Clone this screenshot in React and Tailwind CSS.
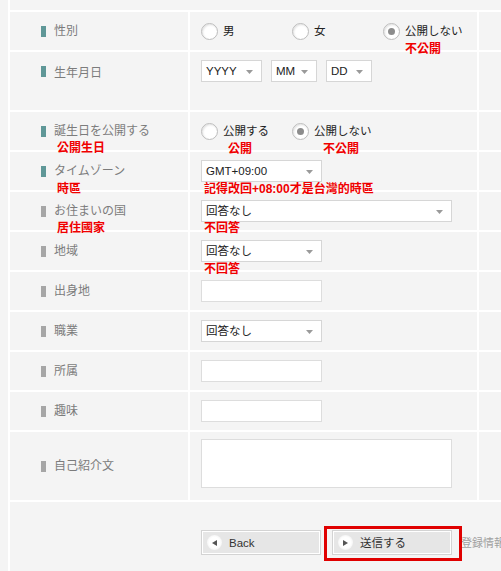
import React from "react";

const JP = "font-[family-name:'Liberation_Sans','Noto_Sans_CJK_JP',sans-serif]";
const TC = "font-[family-name:'Liberation_Sans','Noto_Sans_CJK_TC',sans-serif]";

function Red({ children, className }) {
  return (
    <span
      className={`absolute z-10 whitespace-nowrap text-[12px] leading-[14px] font-bold text-[#f00000] ${TC} ${className}`}
    >
      {children}
    </span>
  );
}

function Label({ text, required, className = "items-center", children }) {
  return (
    <div className={`relative flex bg-[#f4f4f4] pl-[31px] ${className}`}>
      <span
        className={`w-[5px] h-[11px] shrink-0 ${required ? "bg-[#5f9797]" : "bg-[#a6a6a6]"}`}
      />
      <span className={`ml-[8px] text-[12px] leading-[14px] text-[#7c7c7c] whitespace-nowrap ${JP}`}>
        {text}
      </span>
      {children}
    </div>
  );
}

function Radio({ checked, label, w = "w-[91px]" }) {
  return (
    <div className={`flex items-center ${w}`}>
      <span className="flex items-center justify-center w-[17px] h-[17px] rounded-full border border-[#bcbcbc] bg-white shadow-[inset_1px_1px_2px_rgba(0,0,0,0.12)]">
        {checked && <span className="w-[7px] h-[7px] rounded-full bg-[#8c8c8c]" />}
      </span>
      <span className={`ml-[5px] text-[11.5px] leading-[14px] text-[#222] whitespace-nowrap ${JP}`}>
        {label}
      </span>
    </div>
  );
}

function Select({ text, w }) {
  return (
    <div className={`relative flex items-center h-[22px] border border-[#d6d6d6] bg-white ${w}`}>
      <span className={`pl-[4px] text-[11.5px] leading-[14px] text-[#222] whitespace-nowrap ${JP}`}>
        {text}
      </span>
      <svg className="absolute right-[8px] top-[9px]" width="7" height="4" viewBox="0 0 7 4">
        <polygon points="0,0 7,0 3.5,4" fill="#9a9a9a" />
      </svg>
    </div>
  );
}

function Input({ w = "w-[121px]", h = "h-[22px]" }) {
  return <div className={`${w} ${h} border border-[#dddddd] bg-white`} />;
}

function Row({ h, children }) {
  return <div className={`grid grid-cols-[178px_287px_100px] gap-[2px] ${h}`}>{children}</div>;
}

function Value({ className = "items-center", children }) {
  return <div className={`relative flex bg-[#f4f4f4] pl-[11px] ${className}`}>{children}</div>;
}

function Extra() {
  return <div className="bg-[#f4f4f4]" />;
}

function Button({ label, dir }) {
  return (
    <div className="flex items-center w-[120px] h-[25px] border border-[#d3d3d3] bg-[#e6e6e6] shadow-[inset_0_0_0_1px_#ffffff] pl-[5px]">
      <span className="flex items-center justify-center w-[15px] h-[15px] rounded-full bg-[radial-gradient(circle,#ffffff_50%,#e6e6e6_100%)]">
        <svg width="5" height="6" viewBox="0 0 5 6">
          {dir === "left" ? (
            <polygon points="5,0 5,6 0,3" fill="#555" />
          ) : (
            <polygon points="0,0 0,6 5,3" fill="#555" />
          )}
        </svg>
      </span>
      <span className={`ml-[7px] text-[11.5px] leading-[14px] text-[#333] whitespace-nowrap ${JP}`}>
        {label}
      </span>
    </div>
  );
}

export default function App() {
  return (
    <div className="w-[501px] h-[571px] overflow-hidden bg-[#f4f4f4] pl-[8px]">
      <div className="h-full border-l-2 border-white pt-[10px] w-[600px]">
        <div className="flex flex-col gap-[2px] bg-white pt-[2px] h-full">
          <Row h="h-[38px]">
            <Label text="性別" required />
            <Value className="items-center pl-[10px]">
              <Radio label="男" />
              <Radio label="女" />
              <Radio label="公開しない" checked />
              <Red className="left-[215px] top-[30px]">不公開</Red>
            </Value>
            <Extra />
          </Row>
          <Row h="h-[58px]">
            <Label text="生年月日" required className="items-start pt-[14px]" />
            <Value className="items-start pt-[8px] gap-[9px]">
              <Select text="YYYY" w="w-[61px]" />
              <Select text="MM" w="w-[46px]" />
              <Select text="DD" w="w-[46px]" />
            </Value>
            <Extra />
          </Row>
          <Row h="h-[38px]">
            <Label text="誕生日を公開する" required>
              <Red className="left-[47px] top-[29px]">公開生日</Red>
            </Label>
            <Value className="items-center pl-[10px]">
              <Radio label="公開する" />
              <Radio label="公開しない" checked />
              <Red className="left-[38px] top-[30px]">公開</Red>
              <Red className="left-[133px] top-[30px]">不公開</Red>
            </Value>
            <Extra />
          </Row>
          <Row h="h-[38px]">
            <Label text="タイムゾーン" required>
              <Red className="left-[47px] top-[30px]">時區</Red>
            </Label>
            <Value>
              <Select text="GMT+09:00" w="w-[121px]" />
              <Red className="left-[14px] top-[30px]">記得改回+08:00才是台灣的時區</Red>
            </Value>
            <Extra />
          </Row>
          <Row h="h-[38px]">
            <Label text="お住まいの国">
              <Red className="left-[47px] top-[29px]">居住國家</Red>
            </Label>
            <Value>
              <Select text="回答なし" w="w-[251px]" />
              <Red className="left-[14px] top-[29px]">不回答</Red>
            </Value>
            <Extra />
          </Row>
          <Row h="h-[38px]">
            <Label text="地域" />
            <Value>
              <Select text="回答なし" w="w-[121px]" />
              <Red className="left-[14px] top-[30px]">不回答</Red>
            </Value>
            <Extra />
          </Row>
          <Row h="h-[38px]">
            <Label text="出身地" />
            <Value>
              <Input />
            </Value>
            <Extra />
          </Row>
          <Row h="h-[38px]">
            <Label text="職業" />
            <Value>
              <Select text="回答なし" w="w-[121px]" />
            </Value>
            <Extra />
          </Row>
          <Row h="h-[38px]">
            <Label text="所属" />
            <Value>
              <Input />
            </Value>
            <Extra />
          </Row>
          <Row h="h-[38px]">
            <Label text="趣味" />
            <Value>
              <Input />
            </Value>
            <Extra />
          </Row>
          <Row h="h-[68px]">
            <Label text="自己紹介文" />
            <Value className="items-start pt-[7px]">
              <Input w="w-[251px]" h="h-[49px]" />
            </Value>
            <Extra />
          </Row>
          <div className="flex-1 bg-[#f4f4f4] pt-[28px] pl-[191px]">
            <div className="flex items-center gap-[11px]">
              <Button label="Back" dir="left" />
              <div className="relative">
                <Button label="送信する" dir="right" />
                <div className="absolute left-[-8px] top-[-4px] w-[138px] h-[35px] border-[3px] border-[#e00000]" />
              </div>
              <span className={`ml-[-2px] text-[11px] leading-[14px] text-[#a0a0a0] whitespace-nowrap ${JP}`}>
                登録情報を変更する
              </span>
            </div>
          </div>
        </div>
      </div>
    </div>
  );
}
